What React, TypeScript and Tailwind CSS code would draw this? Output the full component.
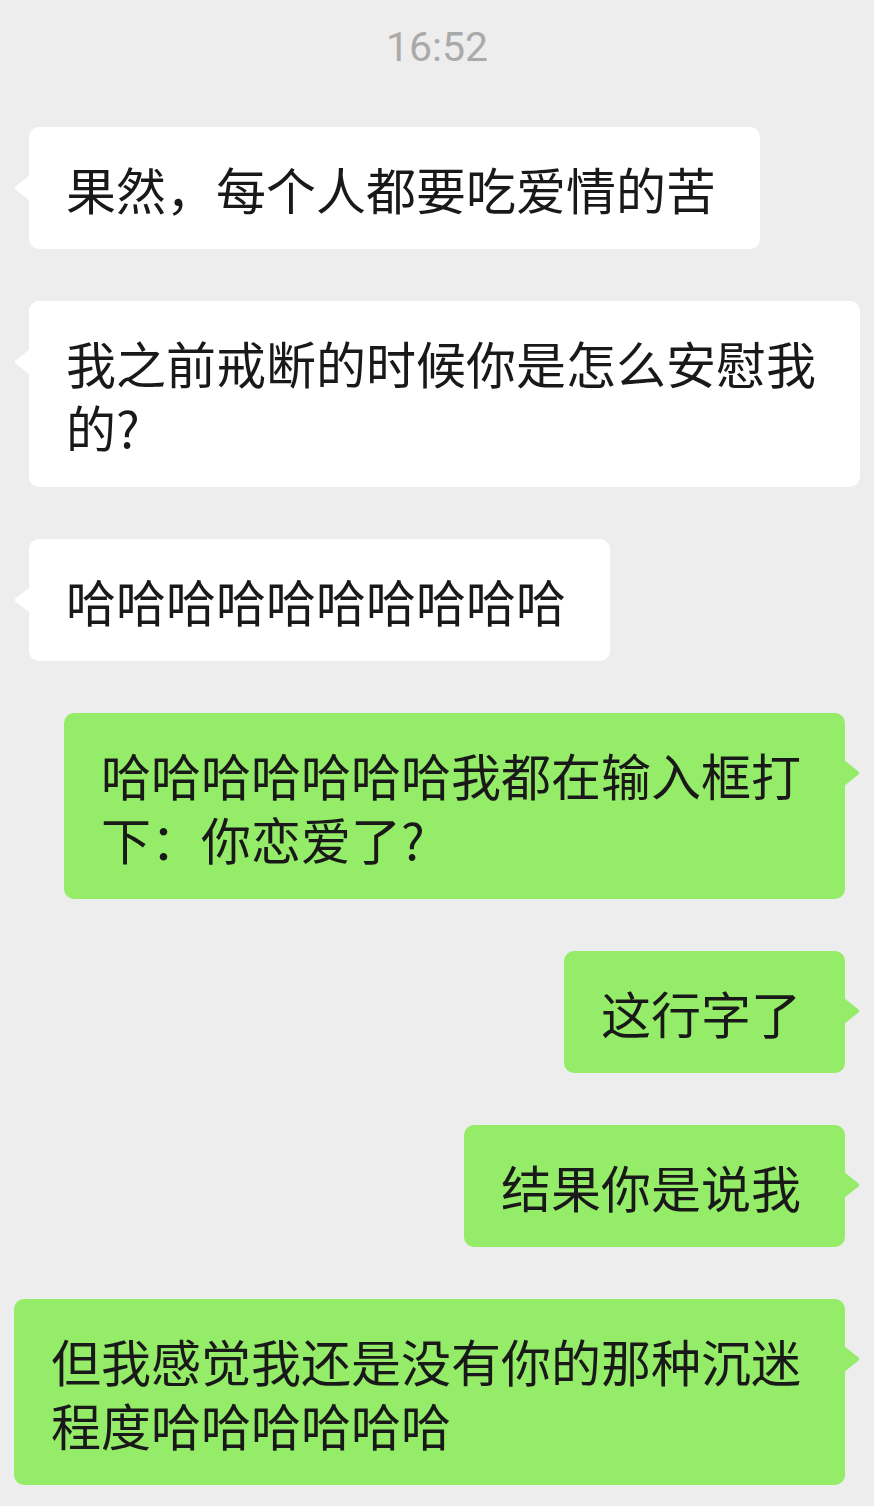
type Msg = { side: 'left' | 'right'; lines: string[] };

const messages: Msg[] = [
  { side: 'left', lines: ['果然，每个人都要吃爱情的苦'] },
  { side: 'left', lines: ['我之前戒断的时候你是怎么安慰我', '的?'] },
  { side: 'left', lines: ['哈哈哈哈哈哈哈哈哈哈'] },
  { side: 'right', lines: ['哈哈哈哈哈哈哈我都在输入框打', '下：你恋爱了?'] },
  { side: 'right', lines: ['这行字了'] },
  { side: 'right', lines: ['结果你是说我'] },
  { side: 'right', lines: ['但我感觉我还是没有你的那种沉迷', '程度哈哈哈哈哈哈'] },
];

function Bubble({ side, lines }: Msg) {
  const left = side === 'left';
  return (
    <div className={left ? 'flex justify-start pl-[29px]' : 'flex justify-end pr-[29px]'}>
      <div
        className={
          'relative rounded-[10px] py-[29px] pl-[37px] pr-[44px] ' +
          (left ? 'bg-white' : 'bg-[#95ec69]')
        }
      >
        {/* tail */}
        {left ? (
          <svg className="absolute left-[-15px] top-[48px]" width="16" height="26" viewBox="0 0 16 26">
            <path d="M16 0 L16 26 L1.5 14.4 Q0 13 1.5 11.6 Z" fill="#ffffff" />
          </svg>
        ) : (
          <svg className="absolute right-[-15px] top-[47px]" width="16" height="26" viewBox="0 0 16 26">
            <path d="M0 0 L0 26 L14.5 14.4 Q16 13 14.5 11.6 Z" fill="#95ec69" />
          </svg>
        )}
        <div className="text-[50px] leading-[64px] text-[#191919] whitespace-nowrap font-['Noto_Sans_CJK_SC','Noto_Sans',sans-serif]">
          {lines.map((l, i) => (
            <div key={i}>{l}</div>
          ))}
        </div>
      </div>
    </div>
  );
}

export default function App() {
  return (
    <div className="w-[874px] h-[1506px] overflow-hidden bg-[#ededed]">
      <div className="pt-[23px] text-center text-[41px] leading-[48px] text-[#aaaaaa] font-['Roboto',sans-serif]">
        16:52
      </div>
      <div className="mt-[56px] flex flex-col gap-[52px]">
        {messages.map((m, i) => (
          <Bubble key={i} {...m} />
        ))}
      </div>
    </div>
  );
}
